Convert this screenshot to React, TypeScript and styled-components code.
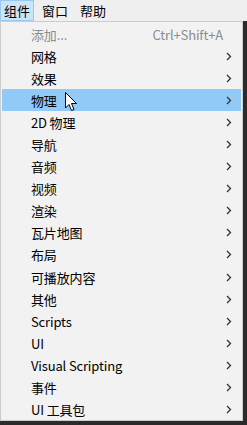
import React from "react";
import styled, { createGlobalStyle } from "styled-components";

const Global = createGlobalStyle`
  html, body { margin: 0; padding: 0; background: #2b2b2b; }
  body { width: 247px; height: 425px; overflow: hidden; font-family: "Noto Sans CJK SC", "Noto Sans", sans-serif; }
`;

const Page = styled.div`
  width: 247px;
  height: 425px;
  display: flex;
  flex-direction: column;
`;

const MenuBar = styled.div`
  height: 21px;
  background: #efefef;
  display: flex;
  align-items: stretch;
  font-size: 13px;
  color: #000;
`;

const BarItem = styled.div<{ $active?: boolean }>`
  display: flex;
  align-items: center;
  padding: 0 3px;
  margin-right: 4px;
  box-sizing: border-box;
  background: ${(p) => (p.$active ? "#cce4f7" : "transparent")};
  border: 1px solid ${(p) => (p.$active ? "#99c9ef" : "transparent")};
`;

const Menu = styled.div`
  width: 243px;
  height: 400px;
  box-sizing: border-box;
  background: #f2f2f2;
  border: 1px solid #cccccc;
  padding: 1px 1px;
  display: flex;
  flex-direction: column;
`;

const Row = styled.div<{ $hover?: boolean; $disabled?: boolean }>`
  position: relative;
  height: 22px;
  flex: 0 0 22.1px;
  display: flex;
  align-items: center;
  padding: 0 9px 0 29px;
  font-size: 13px;
  letter-spacing: -0.15px;
  color: ${(p) => (p.$disabled ? "#8c8c8c" : "#000")};
  background: ${(p) => (p.$hover ? "#91c9f7" : "transparent")};
`;

const Label = styled.span`
  flex: 1;
  white-space: nowrap;
`;

const Shortcut = styled.span`
  color: #8c8c8c;
  margin-right: 9px;
`;

const Arrow = styled.svg`
  width: 6px;
  height: 9px;
`;

const Cursor = styled.svg`
  position: absolute;
  left: 63px;
  top: 3px;
  width: 13px;
  height: 20px;
`;

const items = [
  "网格",
  "效果",
  "物理",
  "2D 物理",
  "导航",
  "音频",
  "视频",
  "渲染",
  "瓦片地图",
  "布局",
  "可播放内容",
  "其他",
  "Scripts",
  "UI",
  "Visual Scripting",
  "事件",
  "UI 工具包",
];

const Chevron = () => (
  <Arrow viewBox="0 0 6 9">
    <path d="M1 1 L4.5 4.5 L1 8" fill="none" stroke="#333" strokeWidth="1.3" />
  </Arrow>
);

export default function App() {
  return (
    <Page>
      <Global />
      <MenuBar>
        <BarItem $active>组件</BarItem>
        <BarItem>窗口</BarItem>
        <BarItem>帮助</BarItem>
      </MenuBar>
      <Menu>
        <Row $disabled>
          <Label>添加...</Label>
          <Shortcut>Ctrl+Shift+A</Shortcut>
        </Row>
        {items.map((it) => (
          <Row key={it} $hover={it === "物理"}>
            <Label>{it}</Label>
            <Chevron />
            {it === "物理" && (
              <Cursor viewBox="0 0 13 20">
                <path
                  d="M0.5 0.5 L0.5 16 L4 12.5 L6.5 18.5 L9 17.5 L6.5 11.5 L11.5 11.5 Z"
                  fill="#fff"
                  stroke="#000"
                  strokeWidth="1"
                />
              </Cursor>
            )}
          </Row>
        ))}
      </Menu>
    </Page>
  );
}
